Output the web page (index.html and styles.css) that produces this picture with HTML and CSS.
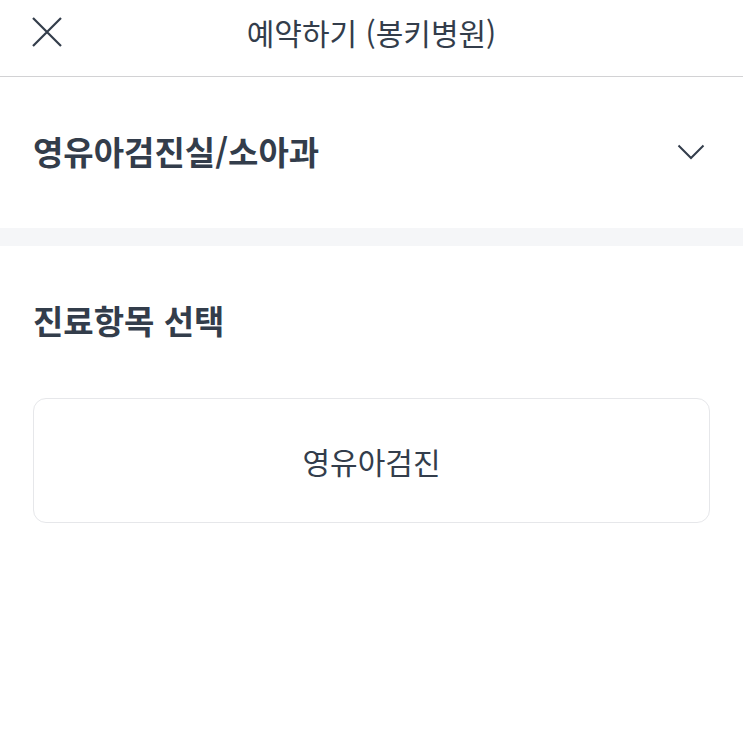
FILE: index.html
```html
<!DOCTYPE html>
<html lang="ko">
<head>
<meta charset="utf-8">
<link rel="stylesheet" href="styles.css">
</head>
<body>
<header class="topbar">
  <button class="close" aria-label="닫기">
    <svg width="30" height="30" viewBox="0 0 30 30"><path d="M1 1 L29 29 M29 1 L1 29" stroke="#333d4b" stroke-width="2.2" fill="none"/></svg>
  </button>
  <h1 class="title">예약하기 (봉키병원)</h1>
</header>
<section class="dept">
  <span class="dept-name">영유아검진실/소아과</span>
  <svg class="chevron" width="28" height="16" viewBox="0 0 28 16"><path d="M1.5 1.5 L14 14 L26.5 1.5" stroke="#333d4b" stroke-width="2" fill="none"/></svg>
</section>
<div class="divider"></div>
<section class="items">
  <h2 class="items-title">진료항목 선택</h2>
  <div class="card">영유아검진</div>
</section>
</body>
</html>
```
FILE: styles.css
```css
html, body {
  margin: 0;
  padding: 0;
  background: #ffffff;
  font-family: "Noto Sans CJK KR", "Noto Sans", sans-serif;
  color: #333d4b;
}
.topbar {
  position: relative;
  height: 76px;
  border-bottom: 1px solid #d2d2d4;
  display: flex;
  align-items: center;
  justify-content: center;
}
.close {
  position: absolute;
  left: 32px;
  top: 17px;
  width: 30px;
  height: 30px;
  padding: 0;
  border: 0;
  background: none;
  display: block;
}
.close svg { display: block; }
.title {
  margin: 0 0 12px 0;
  font-size: 30px;
  font-weight: 400;
  color: #333d4b;
}
.dept {
  height: 151px;
  display: flex;
  align-items: center;
  justify-content: space-between;
  padding: 0 38px 0 33px;
}
.dept-name {
  font-size: 33px;
  font-weight: 700;
  margin-top: -4px;
}
.chevron { display: block; margin-top: -2px; }
.divider {
  height: 18px;
  background: #f5f6f8;
}
.items {
  padding: 50px 33px 0 33px;
}
.items-title {
  margin: 0;
  font-size: 33px;
  font-weight: 700;
  line-height: 48px;
}
.card {
  margin-top: 54px;
  height: 123px;
  border: 1px solid #e6e7ea;
  border-radius: 13px;
  display: flex;
  align-items: center;
  justify-content: center;
  font-size: 30px;
  font-weight: 400;
}
```
